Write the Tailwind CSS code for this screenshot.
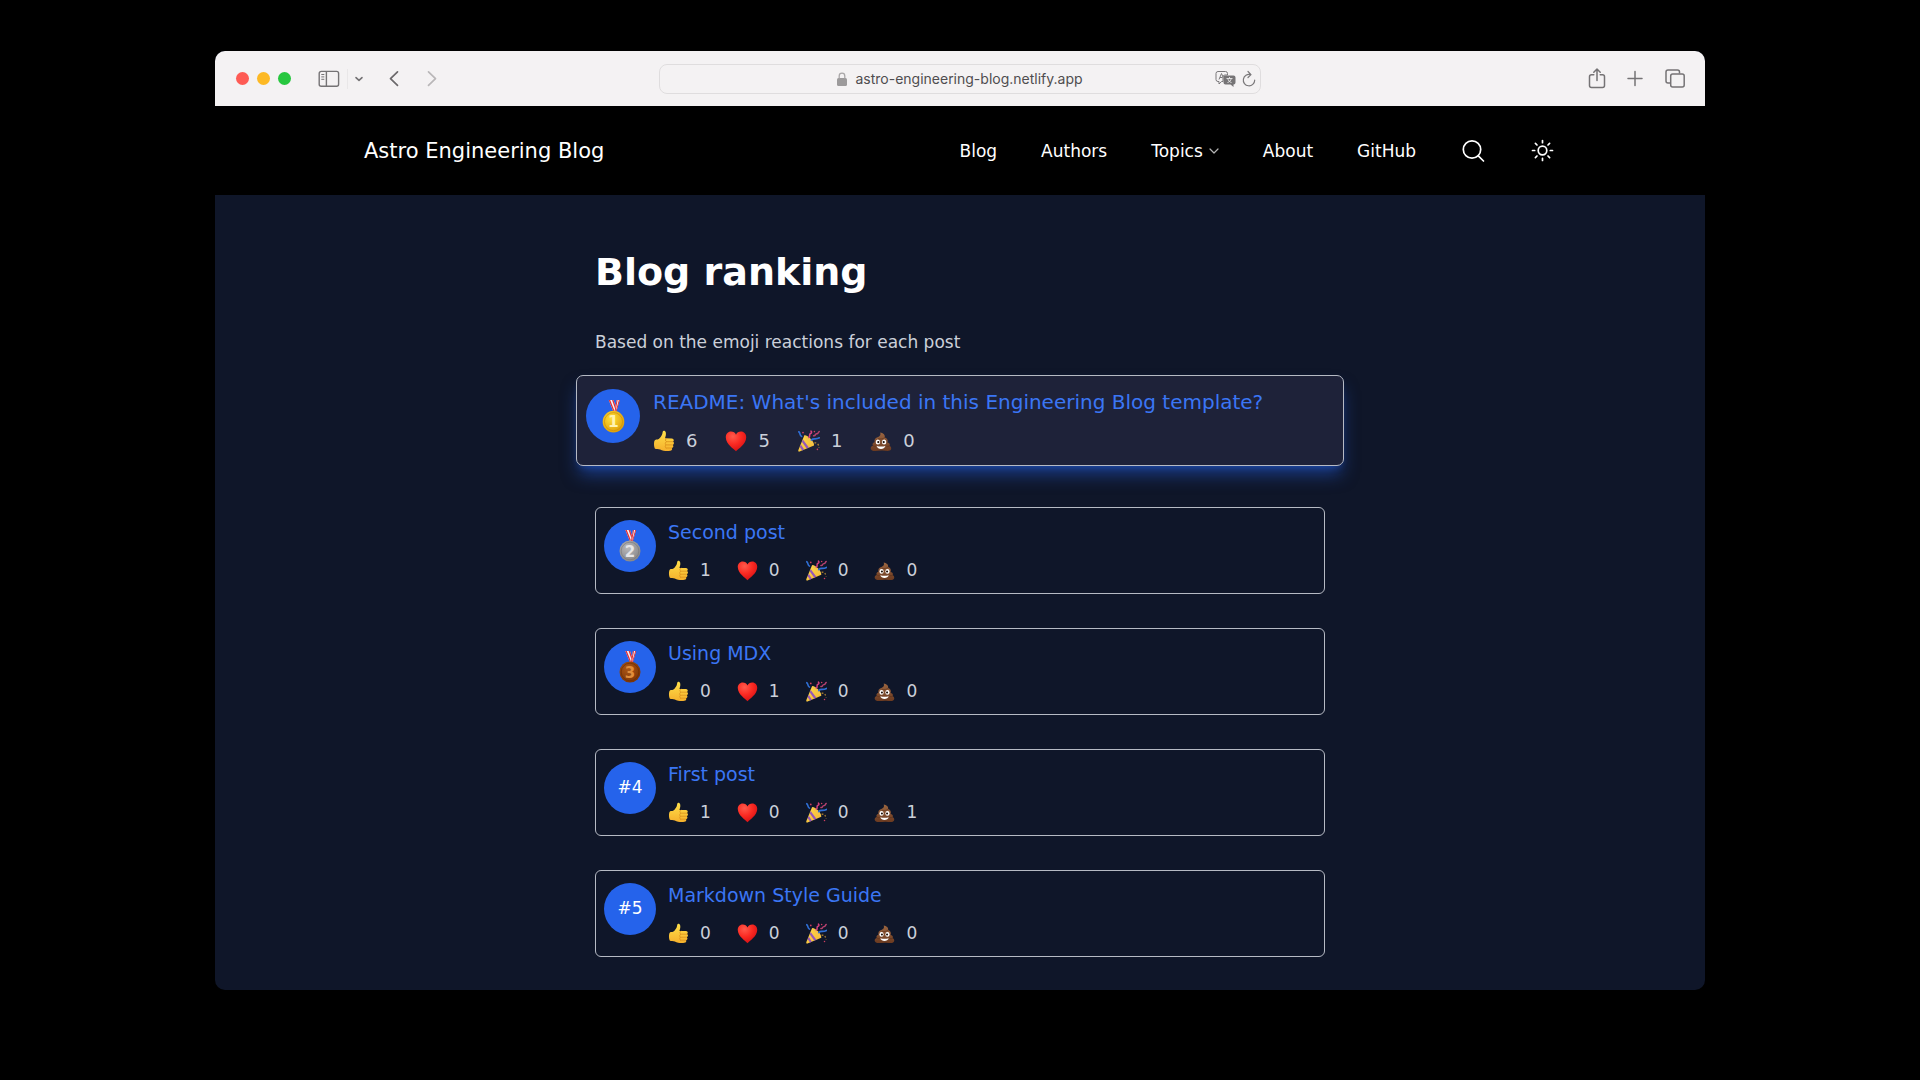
<!DOCTYPE html>
<html lang="en">
<head>
  <meta charset="UTF-8" />
  <meta name="viewport" content="width=device-width, initial-scale=1.0" />
  <title>Blog ranking | Astro Engineering Blog</title>
  <script src="https://cdn.jsdelivr.net/npm/@tailwindcss/browser@4"></script>
</head>
<body class="bg-black min-h-screen px-[215px] py-[51px] font-['DejaVu_Sans',sans-serif] text-white">

  <!-- Emoji sprites -->
  <svg class="absolute size-0" aria-hidden="true">
    <defs>
      <linearGradient id="g-thumb" x1="0" y1="0" x2="0" y2="1"><stop offset="0" stop-color="#ffe04a"/><stop offset="1" stop-color="#f5b02c"/></linearGradient>
      <radialGradient id="g-heart" cx=".35" cy=".25" r=".8"><stop offset="0" stop-color="#ff5a4c"/><stop offset=".5" stop-color="#fb2a22"/><stop offset="1" stop-color="#d40f14"/></radialGradient>
      <linearGradient id="g-cone" x1="0" y1="0" x2="1" y2="1"><stop offset="0" stop-color="#ffdc4c"/><stop offset="1" stop-color="#f4b534"/></linearGradient>
      <linearGradient id="g-poo" x1="0" y1="0" x2="0" y2="1"><stop offset="0" stop-color="#9a6540"/><stop offset="1" stop-color="#6b3a20"/></linearGradient>
      <radialGradient id="g-gold" cx=".4" cy=".35" r=".7"><stop offset="0" stop-color="#ffdf3a"/><stop offset="1" stop-color="#dd9c06"/></radialGradient>
      <radialGradient id="g-silver" cx=".4" cy=".35" r=".7"><stop offset="0" stop-color="#b8b8ba"/><stop offset="1" stop-color="#858587"/></radialGradient>
      <radialGradient id="g-bronze" cx=".4" cy=".35" r=".7"><stop offset="0" stop-color="#ac5716"/><stop offset="1" stop-color="#7a3305"/></radialGradient>
    </defs>
    <symbol id="thumb" viewBox="0 0 22 22">
      <path fill="url(#g-thumb)" d="M1.3 11.2 C1.6 9.6 3 9.3 4.6 9.4 C6.3 9.3 7.4 7.6 8.6 5.6 C9.4 4.3 9.4 3.2 9.7 1.8 C10 .4 12.4 .5 12.8 2.6 C13.2 4.7 12.6 6.4 12 8.3 L18.9 8.4 C21 8.5 21.3 11 19.9 11.6 C21.5 12.3 21.2 14.5 19.7 14.9 C20.9 15.7 20.4 17.7 18.9 18 C19.6 19.2 18.8 20.6 17.2 20.8 C14 21.3 10 21 7.2 19.4 C5.4 19 3 19.4 1.8 18.4 C.9 16.4 .8 13.4 1.3 11.2Z"/>
      <path fill="none" stroke="#d98e1b" stroke-width=".8" stroke-linecap="round" d="M13.4 11.7H19.6 M13 14.9H19.4 M13 18H18.6 M13.5 8.5C12.2 9 12 11 13.4 11.7 C12 12.2 12 14.4 13 14.9 C12 15.6 12 17.5 13 18"/>
    </symbol>
    <symbol id="heart" viewBox="0 0 22 22">
      <path fill="url(#g-heart)" d="M11 21.2 C8.8 18.7 1 14.2 .8 7.4 C.7 3.9 3 1.5 6 1.5 C8.3 1.5 10.2 2.7 11 4.7 C11.8 2.7 13.7 1.5 16 1.5 C19 1.5 21.3 3.9 21.2 7.4 C21 14.2 13.2 18.7 11 21.2Z"/>
    </symbol>
    <symbol id="party" viewBox="0 0 22 22">
      <path fill="url(#g-cone)" d="M6.4 5.2 C9.8 6.6 14.4 11.6 16 15.4 L1.6 21.6 C.5 22 0 21 .4 20Z"/>
      <path fill="#9658b8" d="M4.9 9.4 L10.9 17.6 L8.7 18.6 L4 12Z M2.9 14.4 L6.2 19.6 L4.2 20.500 L1.8 17Z"/>
      <path fill="#f6c548" d="M6.4 5.2C10.4 5.4 16.4 11.400 16 15.4C12.6 14 7.800 9.400 6.4 5.2Z"/>
      <path fill="none" stroke="#2f6fd6" stroke-width="1.7" stroke-linecap="round" d="M.8 1.8C2.6 3 1.2 5 3.6 6.4 M13.4 10C15.4 7.6 17.6 10 21.4 7.8"/>
      <path fill="none" stroke="#d6417f" stroke-width="1.6" stroke-linecap="round" d="M10.8 7.4C13 6.6 10.200 4.2 12.6 3.4C14 2.9 13.6 1.6 13 1.2"/>
      <path fill="none" stroke="#b5426f" stroke-width="1.5" stroke-linecap="round" d="M15.6 5.8C18 6.4 16.600 3.6 18.8 3.8C20.4 4 20 2 21.2 1.6"/>
      <path fill="none" stroke="#b98a34" stroke-width="1.3" stroke-dasharray="1.8 1.8" d="M16.400 13C19 12.2 20.6 14 21 17.6"/>
      <g fill="#cf3f62"><circle cx="5" cy="2.6" r=".9"/><circle cx="16.400" cy="1.6" r=".8"/><circle cx="19.4" cy="19.4" r=".8"/></g>
    </symbol>
    <symbol id="poo" viewBox="0 0 22 22">
      <path fill="url(#g-poo)" d="M10.2 2.6 C12.8 3 15.4 4.6 14.8 7.4 C17.2 8.2 18.4 10.4 17.4 12.6 C20 13 20.2 15 19.4 16 C21.6 16.6 22 19.8 19.6 20.6 C18 21.4 14 20.4 11.6 20.6 C8 20.8 4 21.6 2 20.4 C0 19 .4 16.4 3 15.8 C2 14.6 2.6 12.6 4.6 12.2 C4 9.4 5.4 7.6 8.2 7 C10 6.4 11 4.8 10.2 2.6Z"/>
      <path fill="none" stroke="#5b2f19" stroke-width=".6" d="M8 8.6C10.6 9.4 13.4 9 14.8 7.4 M3 15.8C4 16.4 5 16.4 6 16.2 M16.4 16.2C17.6 16.4 18.6 16.4 19.4 16"/>
      <g fill="#fff"><ellipse cx="7.9" cy="12" rx="2.2" ry="2.5"/><ellipse cx="14.1" cy="12" rx="2.2" ry="2.5"/><path d="M6.6 16C9.4 16.8 12.6 16.8 15.4 16C14.8 18 13 18.9 11 18.9S7.2 18 6.6 16Z"/></g>
      <g fill="#20120b"><circle cx="8.3" cy="12.1" r="1.1"/><circle cx="13.7" cy="12.1" r="1.1"/></g>
    </symbol>
    <symbol id="ribbon" viewBox="0 0 22 32">
      <path fill="#f2f3f7" d="M6.4 0H11L14 9L12.8 11H10.8Z"/>
      <path fill="#e0303a" d="M6.4 0H7.8L12 10.6L10.8 11Z M9.6 0H11L14 9L13.2 10.4Z"/>
      <path fill="#f2f3f7" d="M12 11L14 0H17L13.8 11Z"/>
      <path fill="#e0303a" d="M12 11L14 0H15L13 11Z M16.2 0H17.2L14 11H13.2Z"/>
    </symbol>
  </svg>

  <div class="rounded-[10px] overflow-hidden bg-[#0f1629]">

    <!-- Browser toolbar -->
    <div class="grid grid-cols-[1fr_602px_1fr] items-center h-[55px] bg-[#f4f2f3] text-[#757375]">
      <div class="flex items-center pl-[21px]">
        <div class="flex gap-2">
          <span class="size-[13px] rounded-full bg-[#fe5b54]"></span>
          <span class="size-[13px] rounded-full bg-[#fdb924]"></span>
          <span class="size-[13px] rounded-full bg-[#27c73f]"></span>
        </div>
        <button type="button" aria-label="Show sidebar" class="ml-[26px]">
          <svg class="w-[24px] h-[18px]" viewBox="0 0 24 18" fill="none" stroke="currentColor" stroke-width="1.4"><rect x="2.2" y="1.4" width="19.4" height="14.8" rx="2"/><path d="M9.4 2V16"/><path stroke-width="1" d="M4.3 4.5H7.3M4.3 6.9H7.3M4.3 9.3H7.3"/></svg>
        </button>
        <span class="ml-1.5 h-5 w-px bg-[#e9e7e8]"></span>
        <button type="button" aria-label="Tab groups" class="ml-1.5">
          <svg class="w-[10px] h-[10px]" viewBox="0 0 10 10" fill="none" stroke="currentColor" stroke-width="1.6" stroke-linecap="round" stroke-linejoin="round"><path d="M2 3.6L5 6.4L8 3.6"/></svg>
        </button>
        <button type="button" aria-label="Back" class="ml-6">
          <svg class="w-[12px] h-[18px]" viewBox="0 0 12 18" fill="none" stroke="#6b696b" stroke-width="1.7" stroke-linecap="round" stroke-linejoin="round"><path d="M9.5 1.8L2.5 8.6L9.5 15.4"/></svg>
        </button>
        <button type="button" aria-label="Forward" class="ml-[26px]">
          <svg class="w-[12px] h-[18px]" viewBox="0 0 12 18" fill="none" stroke="#b9b7b8" stroke-width="1.7" stroke-linecap="round" stroke-linejoin="round"><path d="M2.5 1.8L9.5 8.6L2.5 15.4"/></svg>
        </button>
      </div>

      <div class="grid grid-cols-[1fr_auto_1fr] items-center h-[30px] rounded-lg border border-[#dfddde] px-1">
        <span></span>
        <label class="flex items-center gap-2">
          <svg class="w-[10px] h-[14px]" viewBox="0 0 10 14" aria-label="Secure"><rect y="6" width="10" height="8" rx="1.5" fill="#9c9a9b"/><path d="M2.2 6.5V4a2.8 2.8 0 0 1 5.6 0v2.5" fill="none" stroke="#a9a7a8" stroke-width="1.3"/></svg>
          <input type="text" value="astro-engineering-blog.netlify.app" aria-label="Address" class="field-sizing-content font-[Inter,sans-serif] text-[14px] leading-5 text-[#4f4d4f] outline-none" />
        </label>
        <div class="flex items-center justify-end gap-1.5">
          <button type="button" aria-label="Translate">
            <svg class="w-[21px] h-[18px]" viewBox="0 0 21 18"><path d="M3 1.5h7.5a2 2 0 0 1 2 2V5H10a2 2 0 0 0-2 2v4.5H6.6L4 14v-2.5H3a2 2 0 0 1-2-2v-6a2 2 0 0 1 2-2Z" fill="none" stroke="#7b797b"/><path d="M4 9.5L6.5 3.5L8 7M5 7.5H7.5" fill="none" stroke="#7b797b"/><path d="M10.5 5.5H18.5a2 2 0 0 1 2 2V12.5a2 2 0 0 1-2 2V17L15.5 14.5H10.5a2 2 0 0 1-2-2V7.5a2 2 0 0 1 2-2Z" fill="#767476"/><path d="M11.5 8.5H17.5M14.5 7V8.5M12.5 12.5C14.5 12 16 10.5 16.2 8.5M12.8 8.5C13.2 10.5 14.5 12 16.5 12.5" fill="none" stroke="#e8e6e7" stroke-width=".9"/></svg>
          </button>
          <button type="button" aria-label="Reload">
            <svg class="w-[14px] h-[18px]" viewBox="0 0 14 18" fill="none" stroke="#7b797b" stroke-width="1.2" stroke-linecap="round" stroke-linejoin="round"><path d="M8.5 4.6A5.7 5.7 0 1 0 12.7 10.2M6 1.5L9 4.6L6 7.5"/></svg>
          </button>
        </div>
      </div>

      <div class="flex items-center justify-end gap-5 pr-[19px]">
        <button type="button" aria-label="Share">
          <svg class="w-[18px] h-[22px]" viewBox="0 0 18 22" fill="none" stroke="currentColor" stroke-width="1.5" stroke-linecap="round" stroke-linejoin="round"><path d="M5.8 6.8H3.5A2 2 0 0 0 1.5 8.8V17.5A2 2 0 0 0 3.5 19.5H14.5A2 2 0 0 0 16.5 17.5V8.8A2 2 0 0 0 14.5 6.8H12.2M9 12.5V1.3M5.8 4.2L9 1L12.2 4.2"/></svg>
        </button>
        <button type="button" aria-label="New tab">
          <svg class="w-[18px] h-[18px]" viewBox="0 0 18 18" fill="none" stroke="currentColor" stroke-width="1.5" stroke-linecap="round"><path d="M9 1.5V15.5M2 8.5H16"/></svg>
        </button>
        <button type="button" aria-label="Show tabs">
          <svg class="w-[22px] h-[22px]" viewBox="0 0 22 22" fill="none" stroke="currentColor" stroke-width="1.5"><rect x="6.7" y="6" width="13.5" height="13" rx="2"/><path d="M6.5 15H4A2 2 0 0 1 2 13V4A2 2 0 0 1 4 2H13.5A2 2 0 0 1 15.5 4V5.5"/></svg>
        </button>
      </div>
    </div>

    <!-- Site header -->
    <header class="flex items-center justify-between h-[89px] bg-black px-[149px]">
      <a href="#" class="text-[21px] leading-7">Astro Engineering Blog</a>
      <nav class="flex items-center gap-11 text-[17px] leading-6">
        <a href="#">Blog</a>
        <a href="#">Authors</a>
        <button type="button" class="flex items-center gap-1.5">
          Topics
          <svg class="size-[10px]" viewBox="0 0 10 10" fill="none" stroke="#b5b5b5" stroke-width="1.2" stroke-linecap="round" stroke-linejoin="round"><path d="M1 3L5 7L9 3"/></svg>
        </button>
        <a href="#">About</a>
        <a href="#">GitHub</a>
        <button type="button" aria-label="Search">
          <svg class="size-[26px]" viewBox="0 0 26 26" fill="none" stroke="currentColor" stroke-width="1.7" stroke-linecap="round"><circle cx="12" cy="11.5" r="8.7"/><path d="M18.3 17.8L23.5 23"/></svg>
        </button>
        <button type="button" aria-label="Toggle theme">
          <svg class="size-[26px]" viewBox="0 0 26 26" fill="none" stroke="currentColor" stroke-width="1.7" stroke-linecap="round"><circle cx="12.5" cy="12.5" r="4.3"/><path d="M12.5 2.5V4.7M12.5 20.3V22.5M2.5 12.5H4.7M20.3 12.5H22.5M5.4 5.4L7 7M18 18L19.6 19.6M5.4 19.6L7 18M18 7L19.6 5.4"/></svg>
        </button>
      </nav>
    </header>

    <main class="mx-auto max-w-[730px] pt-[53px] pb-[33px]">
      <h1 class="text-[38px] leading-[48px] font-bold">Blog ranking</h1>
      <p class="mt-8 text-[17px] leading-7 text-[#cbd0da]">Based on the emoji reactions for each post</p>

      <ol class="mt-[19px] flex flex-col gap-[34px]">
        <li class="-mx-[19px] mb-[7px] flex gap-[13px] rounded-[7px] border border-[#b6bac4] bg-[#1e2239] px-[9px] pt-[13px] pb-3 shadow-[0_11px_17px_-3px_rgba(37,99,235,0.5),0_4px_7px_-4px_rgba(37,99,235,0.5)]">
          <div class="grid size-[54px] shrink-0 place-items-center rounded-full bg-[#2563eb]">
            <svg class="h-[33px] w-[23px]" viewBox="0 0 22 32" role="img" aria-label="1st place"><use href="#ribbon" width="22" height="32"/><circle cx="11" cy="21" r="10.5" fill="url(#g-gold)"/><circle cx="11" cy="21" r="8.8" fill="none" stroke="#c98a08" stroke-width=".6"/><text x="11" y="26.5" text-anchor="middle" class="text-[15px] font-bold" fill="#fff3b0">1</text></svg>
          </div>
          <div>
            <a href="#" class="block text-[20px] leading-[26px] text-[#3b76f5]">README: What's included in this Engineering Blog template?</a>
            <ul class="mt-3.5 flex gap-7 text-[18px] leading-6 text-[#cbd0da]">
              <li class="flex items-center gap-[11px]"><svg class="size-[22px]"><use href="#thumb"/></svg>6</li>
              <li class="flex items-center gap-[11px]"><svg class="size-[22px]"><use href="#heart"/></svg>5</li>
              <li class="flex items-center gap-[11px]"><svg class="size-[22px]"><use href="#party"/></svg>1</li>
              <li class="flex items-center gap-[11px]"><svg class="size-[22px]"><use href="#poo"/></svg>0</li>
            </ul>
          </div>
        </li>

        <li class="flex gap-3 rounded-md border border-[#b6bac4] px-2 pt-3 pb-[11px]">
          <div class="grid size-[52px] shrink-0 place-items-center rounded-full bg-[#2563eb]">
            <svg class="h-[32px] w-[22px]" viewBox="0 0 22 32" role="img" aria-label="2nd place"><use href="#ribbon" width="22" height="32"/><circle cx="11" cy="21" r="10.5" fill="url(#g-silver)"/><circle cx="11" cy="21" r="8.8" fill="none" stroke="#77777a" stroke-width=".6"/><text x="11" y="26.5" text-anchor="middle" class="text-[15px] font-bold" fill="#e6e6e8">2</text></svg>
          </div>
          <div>
            <a href="#" class="block text-[19px] leading-6 text-[#3b76f5]">Second post</a>
            <ul class="mt-3.5 flex gap-[26px] text-[17px] leading-6 text-[#cbd0da]">
              <li class="flex items-center gap-[11px]"><svg class="size-[21px]"><use href="#thumb"/></svg>1</li>
              <li class="flex items-center gap-[11px]"><svg class="size-[21px]"><use href="#heart"/></svg>0</li>
              <li class="flex items-center gap-[11px]"><svg class="size-[21px]"><use href="#party"/></svg>0</li>
              <li class="flex items-center gap-[11px]"><svg class="size-[21px]"><use href="#poo"/></svg>0</li>
            </ul>
          </div>
        </li>

        <li class="flex gap-3 rounded-md border border-[#b6bac4] px-2 pt-3 pb-[11px]">
          <div class="grid size-[52px] shrink-0 place-items-center rounded-full bg-[#2563eb]">
            <svg class="h-[32px] w-[22px]" viewBox="0 0 22 32" role="img" aria-label="3rd place"><use href="#ribbon" width="22" height="32"/><circle cx="11" cy="21" r="10.5" fill="url(#g-bronze)"/><circle cx="11" cy="21" r="8.8" fill="none" stroke="#6b2c04" stroke-width=".6"/><text x="11" y="26.5" text-anchor="middle" class="text-[15px] font-bold" fill="#e08d3c">3</text></svg>
          </div>
          <div>
            <a href="#" class="block text-[19px] leading-6 text-[#3b76f5]">Using MDX</a>
            <ul class="mt-3.5 flex gap-[26px] text-[17px] leading-6 text-[#cbd0da]">
              <li class="flex items-center gap-[11px]"><svg class="size-[21px]"><use href="#thumb"/></svg>0</li>
              <li class="flex items-center gap-[11px]"><svg class="size-[21px]"><use href="#heart"/></svg>1</li>
              <li class="flex items-center gap-[11px]"><svg class="size-[21px]"><use href="#party"/></svg>0</li>
              <li class="flex items-center gap-[11px]"><svg class="size-[21px]"><use href="#poo"/></svg>0</li>
            </ul>
          </div>
        </li>

        <li class="flex gap-3 rounded-md border border-[#b6bac4] px-2 pt-3 pb-[11px]">
          <div class="grid size-[52px] shrink-0 place-items-center rounded-full bg-[#2563eb] text-[17px]">#4</div>
          <div>
            <a href="#" class="block text-[19px] leading-6 text-[#3b76f5]">First post</a>
            <ul class="mt-3.5 flex gap-[26px] text-[17px] leading-6 text-[#cbd0da]">
              <li class="flex items-center gap-[11px]"><svg class="size-[21px]"><use href="#thumb"/></svg>1</li>
              <li class="flex items-center gap-[11px]"><svg class="size-[21px]"><use href="#heart"/></svg>0</li>
              <li class="flex items-center gap-[11px]"><svg class="size-[21px]"><use href="#party"/></svg>0</li>
              <li class="flex items-center gap-[11px]"><svg class="size-[21px]"><use href="#poo"/></svg>1</li>
            </ul>
          </div>
        </li>

        <li class="flex gap-3 rounded-md border border-[#b6bac4] px-2 pt-3 pb-[11px]">
          <div class="grid size-[52px] shrink-0 place-items-center rounded-full bg-[#2563eb] text-[17px]">#5</div>
          <div>
            <a href="#" class="block text-[19px] leading-6 text-[#3b76f5]">Markdown Style Guide</a>
            <ul class="mt-3.5 flex gap-[26px] text-[17px] leading-6 text-[#cbd0da]">
              <li class="flex items-center gap-[11px]"><svg class="size-[21px]"><use href="#thumb"/></svg>0</li>
              <li class="flex items-center gap-[11px]"><svg class="size-[21px]"><use href="#heart"/></svg>0</li>
              <li class="flex items-center gap-[11px]"><svg class="size-[21px]"><use href="#party"/></svg>0</li>
              <li class="flex items-center gap-[11px]"><svg class="size-[21px]"><use href="#poo"/></svg>0</li>
            </ul>
          </div>
        </li>
      </ol>
    </main>
  </div>

</body>
</html>
